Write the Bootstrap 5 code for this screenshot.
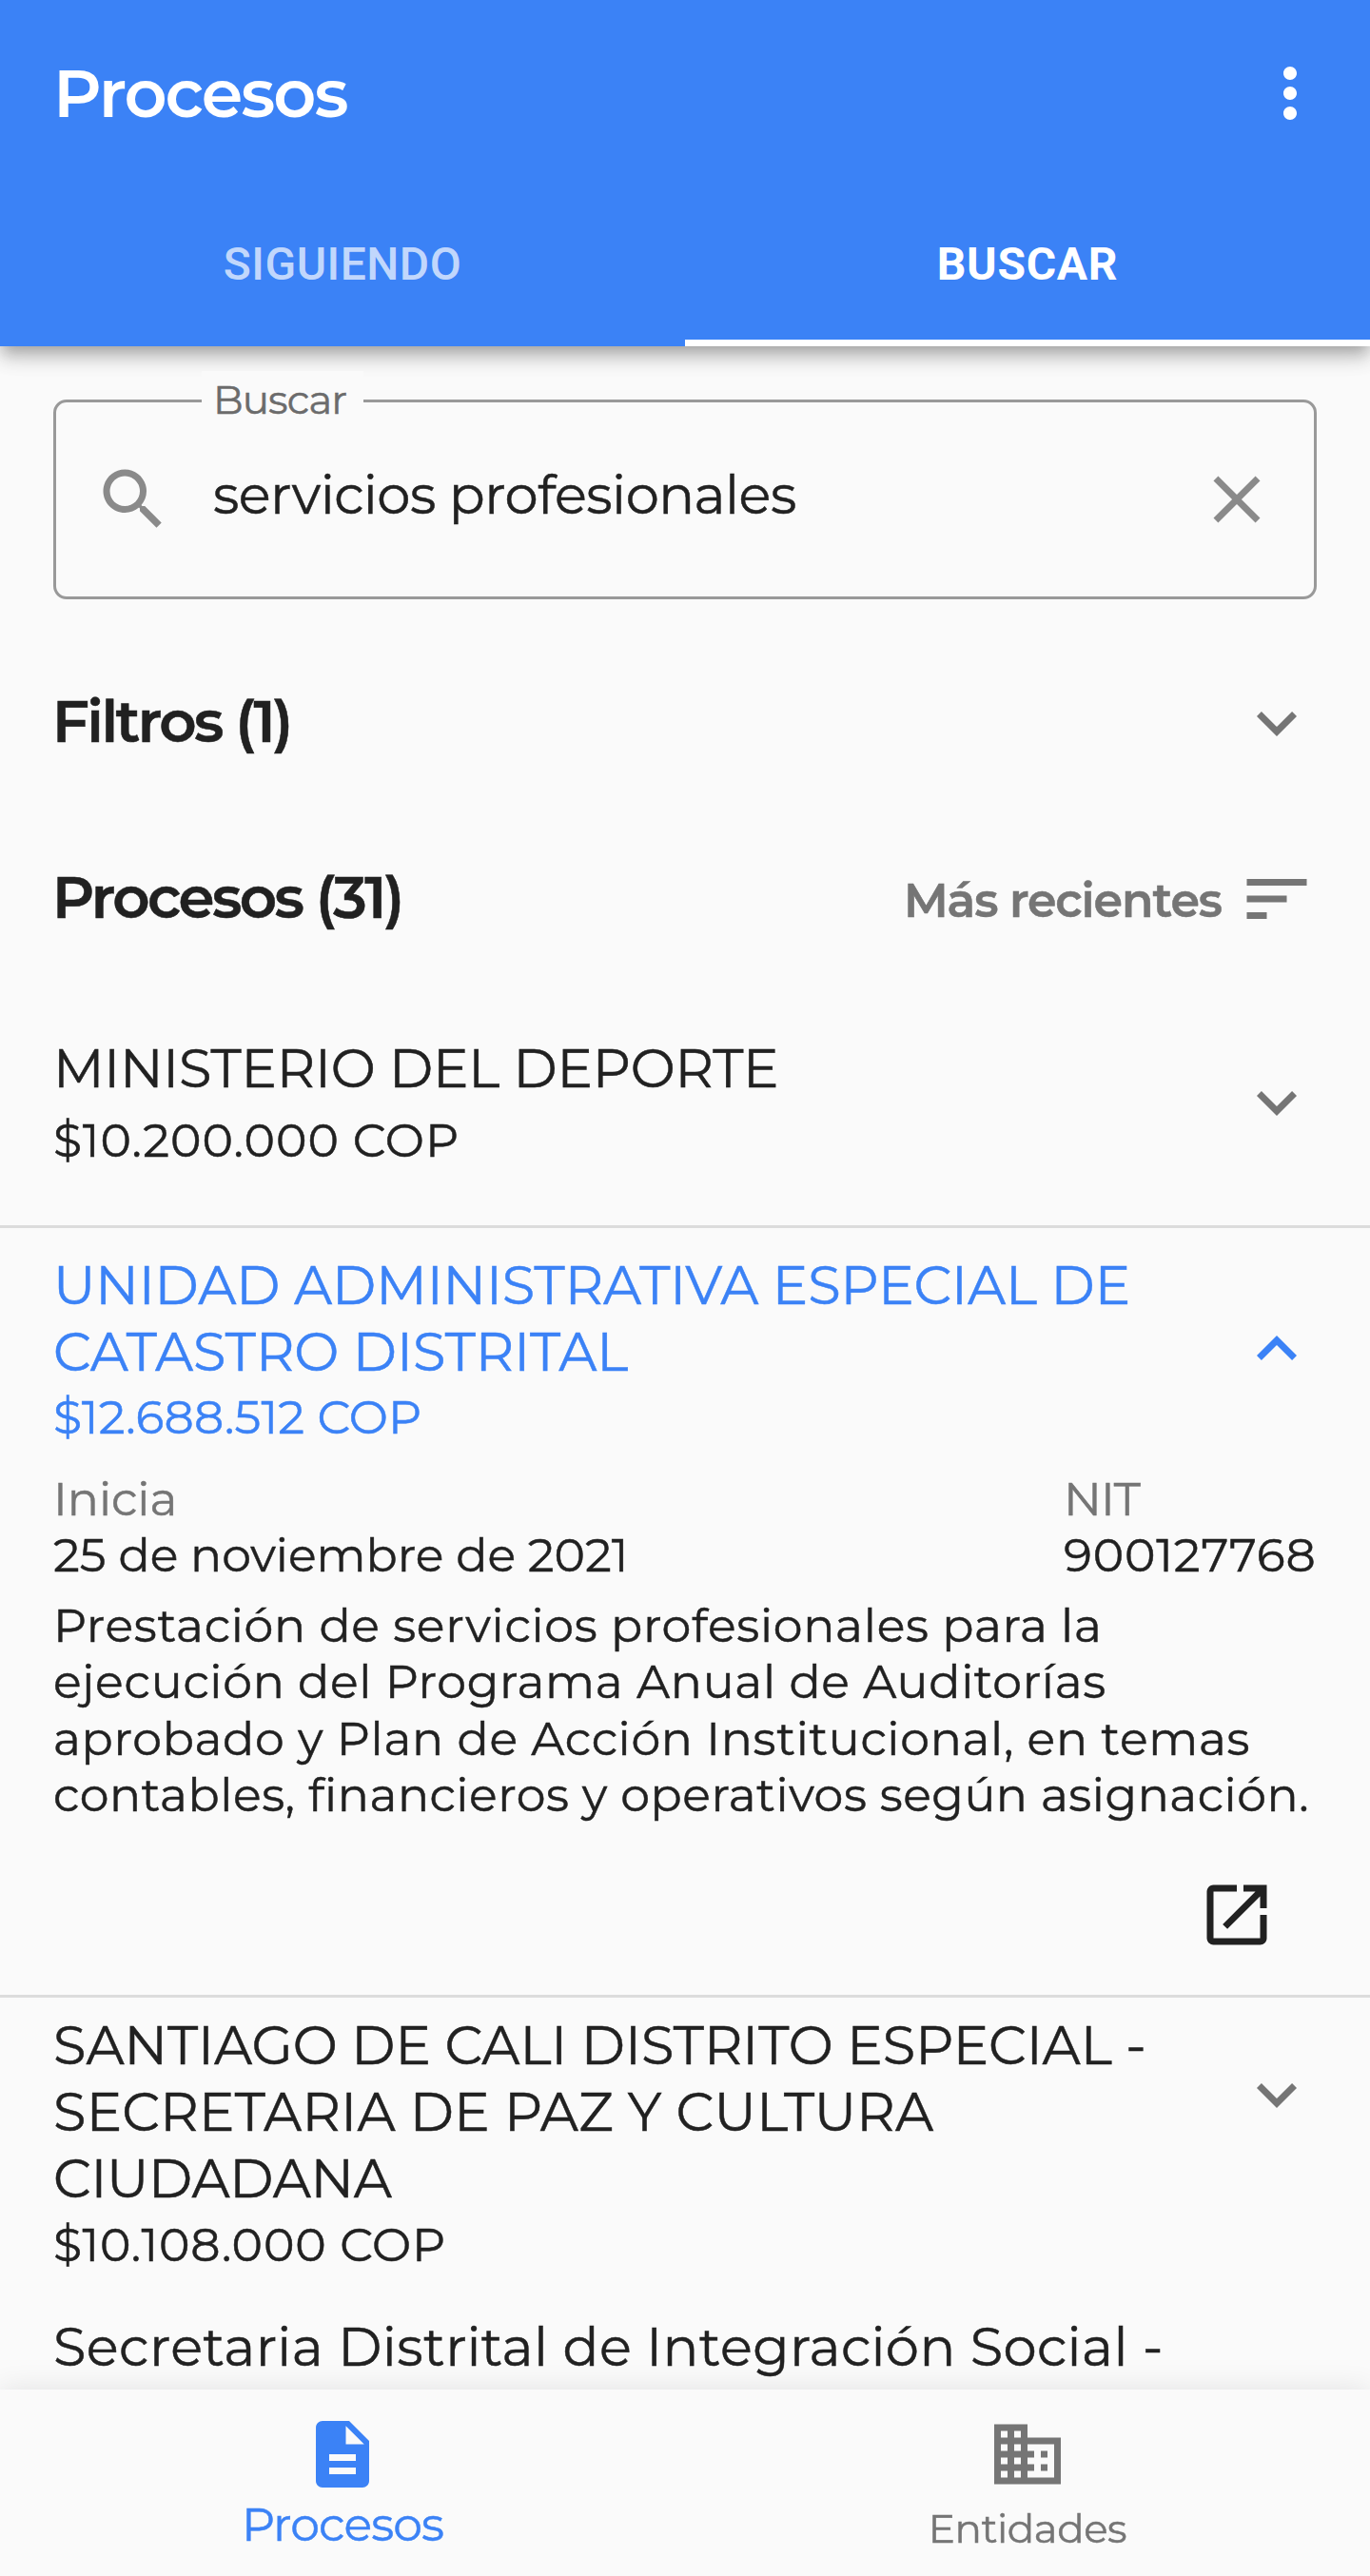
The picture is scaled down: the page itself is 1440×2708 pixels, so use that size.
<!DOCTYPE html>
<html lang="es">
<head>
<meta charset="utf-8">
<meta name="viewport" content="width=device-width, initial-scale=1">
<title>Procesos</title>
<link href="https://cdn.jsdelivr.net/npm/bootstrap@5.3.0/dist/css/bootstrap.min.css" rel="stylesheet">
<style>
:root{--brand:#3b82f6;--ink:#212121;--soft:#757575;--page:#fafafa}
html,body{height:2708px;overflow:hidden}
body{background:var(--page);color:var(--ink);font-family:Montserrat,Inter,sans-serif;font-size:49px;font-weight:400;line-height:59.3px;-webkit-text-stroke:.5px currentColor}
svg{display:block;flex:none;width:84px;height:84px;fill:currentColor}
.brand-ink{color:var(--brand)}
.soft-ink{color:var(--soft)}
.gutter{padding-left:56px;padding-right:56px}
/* app bar */
.app-bar{-webkit-text-stroke:0;background:var(--brand);box-shadow:0 7px 14px -3.5px rgba(0,0,0,.2),0 14px 17.5px rgba(0,0,0,.14),0 3.5px 30px rgba(0,0,0,.1)}
.app-bar .navbar{height:196px;padding:0 42px 0 56px}
.app-title{font-size:70px;font-weight:600;letter-spacing:-2px;line-height:84px}
.app-tabs .nav-link{height:168px;padding:2px 0 0;border:0;border-bottom:7px solid transparent;border-radius:0;font-family:Roboto,sans-serif;font-size:48px;font-weight:500;letter-spacing:.5px;color:rgba(255,255,255,.7)}
.app-tabs .nav-link.active{border-bottom-color:#fff;background:none;color:#fff;letter-spacing:.7px;font-weight:700}
/* search field */
.search-box{height:210px;margin:56px 56px 0;border:3px solid #999;border-radius:14px;padding:0 39px}
.search-tag{left:153px;top:-33px;width:170px;padding-left:12px;background:var(--page);color:#6b6b6b;font-size:42px;letter-spacing:-.9px;line-height:60px}
.search-text{margin-left:42px;padding-bottom:10px;font-size:56px;letter-spacing:-.53px;line-height:70px}
.search-box svg{color:#8a8a8a}
/* section rows */
.section-row{height:168px}
.section-name{font-size:61px;font-weight:600;letter-spacing:-2.55px;padding-bottom:4px;line-height:76px;margin-left:-1px}
.sort-name{font-size:49px;font-weight:600;letter-spacing:-1.06px;padding-top:4px;margin-right:16px}
/* processes */
.process{border-bottom:3px solid #dcdcdc}
.entity{font-size:56px;line-height:70px}
.entity span,.summary span{display:block;white-space:nowrap}
.amount{margin-top:4px;line-height:60px}
.facts{padding-top:1px}
.summary{margin-top:14px;line-height:59.5px}
/* bottom bar */
.tab-bar{height:196px;background:var(--page);box-shadow:0 0 28px rgba(0,0,0,.1)}
.tab-bar .nav-link{padding:26px 0 0;color:var(--soft);font-size:42px;line-height:60px;letter-spacing:-.46px}
.tab-bar .nav-link span{margin-top:6px}
.tab-bar .nav-link.active{color:var(--brand);background:none;font-size:49px;letter-spacing:-.87px}
.tab-bar .nav-link.active span{margin-top:2px}
</style>
</head>
<body>
<svg class="d-none" aria-hidden="true">
  <symbol id="down" viewBox="0 0 24 24"><path d="M16.59 8.59 12 13.17 7.41 8.59 6 10l6 6 6-6z"/></symbol>
  <symbol id="up" viewBox="0 0 24 24"><path d="m12 8-6 6 1.41 1.41L12 10.83l4.59 4.58L18 14z"/></symbol>
</svg>

<header class="app-bar position-relative">
  <div class="navbar flex-nowrap">
    <div class="app-title text-white">Procesos</div>
    <svg class="text-white" viewBox="0 0 24 24"><path d="M12 8c1.1 0 2-.9 2-2s-.9-2-2-2-2 .9-2 2 .9 2 2 2zm0 2c-1.1 0-2 .9-2 2s.9 2 2 2 2-.9 2-2-.9-2-2-2zm0 6c-1.1 0-2 .9-2 2s.9 2 2 2 2-.9 2-2-.9-2-2-2z"/></svg>
  </div>
  <nav class="app-tabs nav nav-fill">
    <a class="nav-link nav-item w-50 d-flex align-items-center justify-content-center">SIGUIENDO</a>
    <a class="nav-link nav-item w-50 d-flex align-items-center justify-content-center active">BUSCAR</a>
  </nav>
</header>

<main>
  <div class="search-box position-relative d-flex align-items-center">
    <label class="search-tag position-absolute">Buscar</label>
    <svg viewBox="0 0 24 24"><path d="M15.5 14h-.79l-.28-.27C15.41 12.59 16 11.11 16 9.5 16 5.91 13.09 3 9.5 3S3 5.91 3 9.5 5.91 16 9.5 16c1.61 0 3.09-.59 4.23-1.57l.27.28v.79l5 4.99L20.49 19l-4.99-5zm-6 0C7.01 14 5 11.99 5 9.5S7.01 5 9.5 5 14 7.01 14 9.5 11.99 14 9.5 14z"/></svg>
    <div class="search-text flex-grow-1">servicios profesionales</div>
    <svg viewBox="0 0 24 24"><path d="M19 6.41 17.59 5 12 10.59 6.41 5 5 6.41 10.59 12 5 17.59 6.41 19 12 13.41 17.59 19 19 17.59 13.41 12z"/></svg>
  </div>

  <div class="section-row gutter d-flex align-items-center justify-content-between" style="margin-top:46px">
    <div class="section-name">Filtros (1)</div>
    <svg class="soft-ink"><use href="#down"/></svg>
  </div>

  <div class="section-row gutter d-flex align-items-center justify-content-between" style="margin-top:17px">
    <div class="section-name">Procesos (31)</div>
    <div class="soft-ink d-flex align-items-center">
      <div class="sort-name">Más recientes</div>
      <svg viewBox="0 0 24 24"><path d="M3 18h6v-2H3v2zM3 6v2h18V6H3zm0 7h12v-2H3v2z"/></svg>
    </div>
  </div>

  <section class="process">
    <div class="gutter d-flex align-items-center justify-content-between" style="height:259px">
      <div>
        <div class="entity"><span style="letter-spacing:-.22px">MINISTERIO DEL DEPORTE</span></div>
        <div class="amount" style="letter-spacing:1.05px;margin-top:11px">$10.200.000 COP</div>
      </div>
      <svg class="soft-ink"><use href="#down"/></svg>
    </div>
  </section>

  <section class="process">
    <div class="gutter brand-ink d-flex align-items-center justify-content-between" style="height:254px">
      <div>
        <div class="entity"><span style="letter-spacing:-.08px">UNIDAD ADMINISTRATIVA ESPECIAL DE</span><span style="letter-spacing:-.06px">CATASTRO DISTRITAL</span></div>
        <div class="amount" style="letter-spacing:.22px">$12.688.512 COP</div>
      </div>
      <svg><use href="#up"/></svg>
    </div>
    <div class="facts gutter d-flex justify-content-between">
      <div>
        <div class="soft-ink">Inicia</div>
        <div>25 de noviembre de 2021</div>
      </div>
      <div style="width:266px">
        <div class="soft-ink" style="letter-spacing:-.9px">NIT</div>
        <div style="letter-spacing:.85px">900127768</div>
      </div>
    </div>
    <div class="summary gutter"><span style="letter-spacing:.72px">Prestación de servicios profesionales para la</span><span style="letter-spacing:.72px">ejecución del Programa Anual de Auditorías</span><span style="letter-spacing:.7px">aprobado y Plan de Acción Institucional, en temas</span><span style="letter-spacing:.54px">contables, financieros y operativos según asignación.</span></div>
    <div class="d-flex justify-content-end" style="padding:54px 98px 42px">
      <svg viewBox="0 0 24 24"><path d="M19 19H5V5h7V3H5c-1.11 0-2 .9-2 2v14c0 1.1.89 2 2 2h14c1.1 0 2-.9 2-2v-7h-2v7zM14 3v2h3.59l-9.83 9.83 1.41 1.41L19 6.41V10h2V3h-7z"/></svg>
    </div>
  </section>

  <section>
    <div class="gutter d-flex align-items-start justify-content-between">
      <div style="padding-top:15px">
        <div class="entity"><span style="letter-spacing:-.04px">SANTIAGO DE CALI DISTRITO ESPECIAL -</span><span style="letter-spacing:.25px">SECRETARIA DE PAZ Y CULTURA</span><span style="letter-spacing:-.3px">CIUDADANA</span></div>
        <div class="amount" style="letter-spacing:.86px;margin-top:5px">$10.108.000 COP</div>
      </div>
      <svg class="soft-ink" style="margin-top:60px"><use href="#down"/></svg>
    </div>
  </section>

  <section class="gutter" style="padding-top:42px">
    <div class="entity"><span style="letter-spacing:.4px">Secretaria Distrital de Integración Social -</span></div>
  </section>
</main>

<nav class="tab-bar fixed-bottom nav nav-fill">
  <a class="nav-link nav-item w-50 active d-flex flex-column align-items-center">
    <svg viewBox="0 0 24 24"><path d="M14 2H6c-1.1 0-1.99.9-1.99 2L4 20c0 1.1.89 2 1.99 2H18c1.1 0 2-.9 2-2V8l-6-6zm2 16H8v-2h8v2zm0-4H8v-2h8v2zm-3-5V3.5L18.5 9H13z"/></svg>
    <span>Procesos</span>
  </a>
  <a class="nav-link nav-item w-50 d-flex flex-column align-items-center">
    <svg viewBox="0 0 24 24"><path d="M12 7V3H2v18h20V7H12zM6 19H4v-2h2v2zm0-4H4v-2h2v2zm0-4H4V9h2v2zm0-4H4V5h2v2zm4 12H8v-2h2v2zm0-4H8v-2h2v2zm0-4H8V9h2v2zm0-4H8V5h2v2zm10 12h-8v-2h2v-2h-2v-2h2v-2h-2V9h8v10zm-2-8h-2v2h2v-2zm0 4h-2v2h2v-2z"/></svg>
    <span>Entidades</span>
  </a>
</nav>
<script src="https://cdn.jsdelivr.net/npm/bootstrap@5.3.0/dist/js/bootstrap.bundle.min.js"></script>
</body>
</html>
